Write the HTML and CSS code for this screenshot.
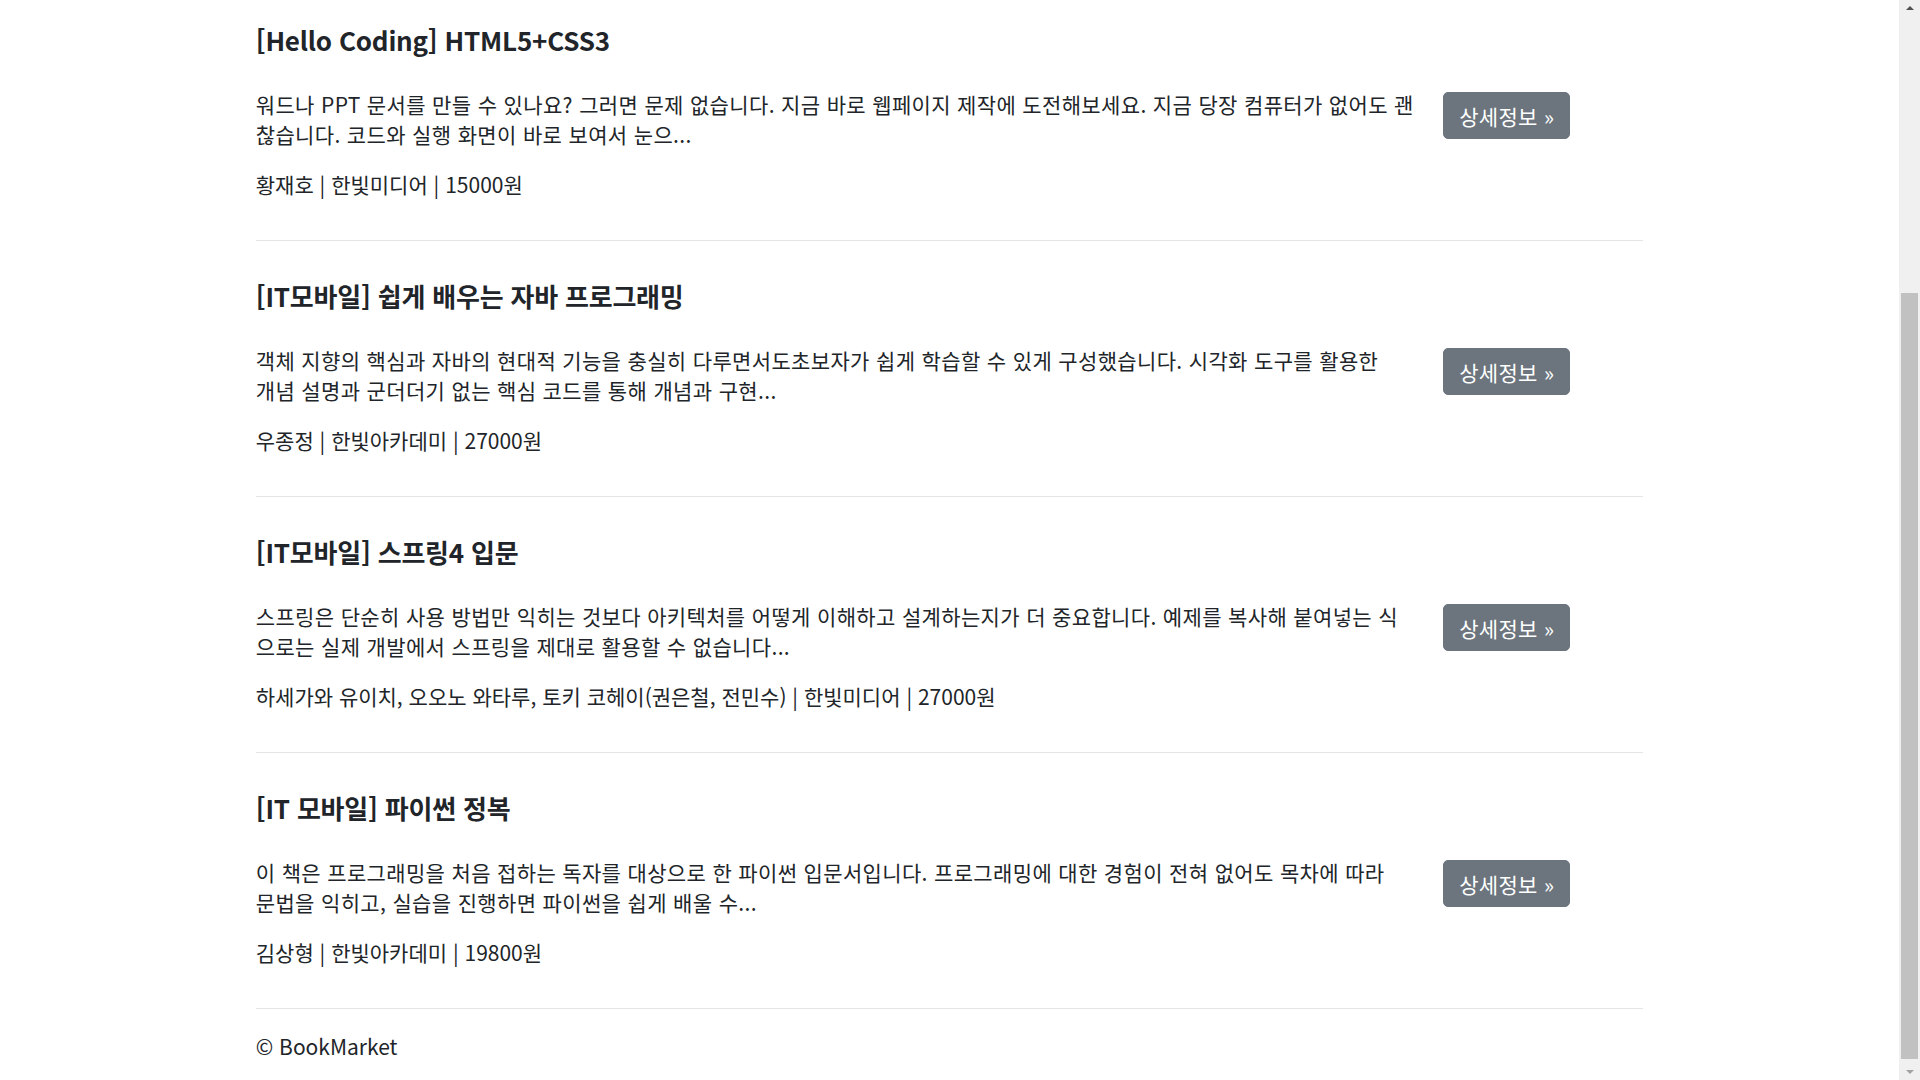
FILE: index.html
```html
<!DOCTYPE html>
<html lang="ko">
<head>
<meta charset="utf-8">
<title>도서 목록</title>
<link rel="stylesheet" href="styles.css">
</head>
<body>
<div class="page">
  <main class="main">
    <div class="container">
      <div class="row">
        <div class="col-10">
          <h5 class="title">[Hello Coding] HTML5+CSS3</h5>
          <p class="desc">워드나 PPT 문서를 만들 수 있나요? 그러면 문제 없습니다. 지금 바로 웹페이지 제작에 도전해보세요. 지금 당장 컴퓨터가 없어도 괜<br>찮습니다. 코드와 실행 화면이 바로 보여서 눈으...</p>
          <p class="meta">황재호 | 한빛미디어 | 15000원</p>
        </div>
        <div class="col-2"><a class="btn" href="#">상세정보 &raquo;</a></div>
      </div>
      <hr class="divider">
      <div class="row">
        <div class="col-10">
          <h5 class="title">[IT모바일] 쉽게 배우는 자바 프로그래밍</h5>
          <p class="desc">객체 지향의 핵심과 자바의 현대적 기능을 충실히 다루면서도초보자가 쉽게 학습할 수 있게 구성했습니다. 시각화 도구를 활용한<br>개념 설명과 군더더기 없는 핵심 코드를 통해 개념과 구현...</p>
          <p class="meta">우종정 | 한빛아카데미 | 27000원</p>
        </div>
        <div class="col-2"><a class="btn" href="#">상세정보 &raquo;</a></div>
      </div>
      <hr class="divider">
      <div class="row">
        <div class="col-10">
          <h5 class="title">[IT모바일] 스프링4 입문</h5>
          <p class="desc">스프링은 단순히 사용 방법만 익히는 것보다 아키텍처를 어떻게 이해하고 설계하는지가 더 중요합니다. 예제를 복사해 붙여넣는 식<br>으로는 실제 개발에서 스프링을 제대로 활용할 수 없습니다...</p>
          <p class="meta">하세가와 유이치, 오오노 와타루, 토키 코헤이(권은철, 전민수) | 한빛미디어 | 27000원</p>
        </div>
        <div class="col-2"><a class="btn" href="#">상세정보 &raquo;</a></div>
      </div>
      <hr class="divider">
      <div class="row">
        <div class="col-10">
          <h5 class="title">[IT 모바일] 파이썬 정복</h5>
          <p class="desc">이 책은 프로그래밍을 처음 접하는 독자를 대상으로 한 파이썬 입문서입니다. 프로그래밍에 대한 경험이 전혀 없어도 목차에 따라<br>문법을 익히고, 실습을 진행하면 파이썬을 쉽게 배울 수...</p>
          <p class="meta">김상형 | 한빛아카데미 | 19800원</p>
        </div>
        <div class="col-2"><a class="btn" href="#">상세정보 &raquo;</a></div>
      </div>
      <hr class="divider">
      <footer class="footer">
        <p>&copy; BookMarket</p>
      </footer>
    </div>
  </main>
  <div class="scrollbar">
    <div class="sb-btn"><span class="arrow-up"></span></div>
    <div class="sb-track"><div class="sb-thumb"></div></div>
    <div class="sb-btn"><span class="arrow-down"></span></div>
  </div>
</div>
</body>
</html>
```
FILE: styles.css
```css
html, body {
  margin: 0;
  padding: 0;
  height: 1080px;
  overflow: hidden;
  background: #fff;
}
body {
  font-family: "Noto Sans CJK KR", "Noto Sans", sans-serif;
  font-size: 21px;
  line-height: 30px;
  color: #212529;
}
.page {
  display: flex;
  height: 1080px;
}
.main {
  flex: 1;
  padding-top: 5px;
  overflow: hidden;
}
.container {
  width: 1425px;
  margin: 0 auto;
  padding: 0 18.75px;
  box-sizing: border-box;
}
.row {
  display: flex;
  margin: 0 -18.75px;
}
.col-10 {
  flex: 0 0 83.3333%;
  max-width: 83.3333%;
  padding: 0 18.75px;
  box-sizing: border-box;
}
.col-2 {
  flex: 0 0 16.6667%;
  max-width: 16.6667%;
  padding: 87px 18.75px 0;
  box-sizing: border-box;
}
.title {
  margin: 20px 0 0;
  font-size: 26px;
  line-height: 30px;
  letter-spacing: -0.2px;
  font-weight: 700;
}
.desc {
  margin: 34px 0 20px;
  letter-spacing: 0.35px;
  white-space: nowrap;
}
.meta {
  margin: 0 0 21px;
}
.btn {
  display: inline-block;
  padding: 7.5px 15px;
  font-size: 21px;
  line-height: 30px;
  letter-spacing: 0.3px;
  color: #fff;
  background: #6c757d;
  border: 1.25px solid #6c757d;
  border-radius: 5px;
  text-decoration: none;
}
.divider {
  margin: 20px 0;
  border: 0;
  border-top: 1.25px solid rgba(0, 0, 0, 0.1);
}
.footer {
  padding-top: 2px;
}
.footer p {
  margin: 0;
}
.scrollbar {
  width: 21px;
  flex: 0 0 21px;
  background: #f0f0f0;
  display: flex;
  flex-direction: column;
}
.sb-btn {
  height: 21px;
  display: flex;
  align-items: center;
  justify-content: center;
}
.arrow-up {
  width: 0;
  height: 0;
  border-left: 4px solid transparent;
  border-right: 4px solid transparent;
  border-bottom: 4px solid #505050;
  margin-bottom: 6px;
}
.arrow-down {
  width: 0;
  height: 0;
  border-left: 4px solid transparent;
  border-right: 4px solid transparent;
  border-top: 4px solid #a3a3a3;
  margin-top: 4px;
}
.sb-track {
  flex: 1;
  padding: 272px 2px 0;
}
.sb-thumb {
  height: 766px;
  background: #c1c1c1;
}
```
